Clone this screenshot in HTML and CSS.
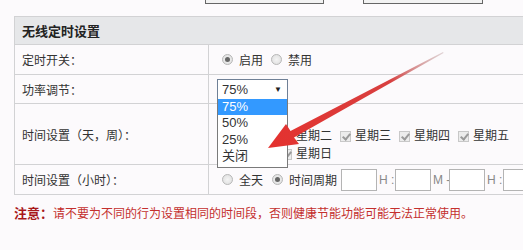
FILE: index.html
```html
<!DOCTYPE html>
<html lang="zh-CN">
<head>
  <meta charset="UTF-8">
  <meta name="viewport" content="width=device-width, initial-scale=1.0">
  <title>无线定时设置</title>
  <link rel="stylesheet" href="styles.css">
</head>
<body>
  <div class="toolbar">
    <button class="btn btn-first">保存</button>
    <button class="btn btn-second">取消</button>
  </div>

  <table class="settings">
    <colgroup>
      <col class="col-label">
      <col class="col-value">
    </colgroup>
    <thead>
      <tr>
        <th colspan="2">无线定时设置</th>
      </tr>
    </thead>
    <tbody>
      <tr class="row-switch">
        <td class="label">定时开关：</td>
        <td class="value">
          <div class="line">
            <span class="radio checked"></span><span class="opt">启用</span>
            <span class="radio"></span><span class="opt">禁用</span>
          </div>
        </td>
      </tr>
      <tr class="row-power">
        <td class="label">功率调节：</td>
        <td class="value">
          <div class="select">
            <span class="select-text">75%</span>
            <span class="select-caret">▼</span>
            <ul class="dropdown">
              <li class="active">75%</li>
              <li>50%</li>
              <li>25%</li>
              <li>关闭</li>
            </ul>
          </div>
        </td>
      </tr>
      <tr class="row-days">
        <td class="label">时间设置（天，周）：</td>
        <td class="value">
          <div class="days">
            <span class="day"><span class="check"></span>星期一</span>
            <span class="day"><span class="check"></span>星期二</span>
            <span class="day"><span class="check"></span>星期三</span>
            <span class="day"><span class="check"></span>星期四</span>
            <span class="day"><span class="check"></span>星期五</span>
            <span class="day"><span class="check"></span>星期六</span>
            <span class="day"><span class="check"></span>星期日</span>
          </div>
        </td>
      </tr>
      <tr class="row-hours">
        <td class="label">时间设置（小时）：</td>
        <td class="value">
          <div class="line">
            <span class="radio"></span><span class="opt wide">全天</span>
            <span class="radio checked"></span><span class="opt tight">时间周期</span>
            <input type="text" class="time"><span class="unit">H :</span>
            <input type="text" class="time"><span class="unit">M -</span>
            <input type="text" class="time"><span class="unit">H :</span>
            <input type="text" class="time">
          </div>
        </td>
      </tr>
    </tbody>
  </table>

  <p class="note"><b>注意：</b>请不要为不同的行为设置相同的时间段，否则健康节能功能可能无法正常使用。</p>

  <svg class="arrow" width="523" height="250" viewBox="0 0 523 250">
    <defs>
      <linearGradient id="arrowFill" x1="443" y1="52" x2="268" y2="148" gradientUnits="userSpaceOnUse">
        <stop offset="0" stop-color="#b89a9a" stop-opacity="0.4"/>
        <stop offset="0.3" stop-color="#d84040"/>
        <stop offset="1" stop-color="#e4312e"/>
      </linearGradient>
    </defs>
    <polygon points="443,52 290.5,131 286,124 268,148 299,144 294,137.5 443.6,53" fill="url(#arrowFill)"/>
  </svg>
</body>
</html>
```

FILE: styles.css
```css
* {
  box-sizing: border-box;
}
body {
  margin: 0;
  background-color: #fcfafc;
  font-family: "Liberation Sans", "Noto Sans CJK SC", sans-serif;
  font-size: 12px;
  color: #333;
  overflow: hidden;
  width: 523px;
  height: 250px;
  position: relative;
}
.toolbar {
  height: 4px;
  overflow: hidden;
  display: flex;
  align-items: flex-end;
}
.btn {
  height: 24px;
  border: 1px solid #666;
  background-color: #f2f2f2;
  font-size: 12px;
  padding: 0;
  flex: none;
}
.btn-first {
  width: 119px;
  margin-left: 205px;
}
.btn-second {
  width: 120px;
  margin-left: 39px;
}
.settings {
  margin: 12px 0 0 14px;
  width: 530px;
  border-collapse: collapse;
  table-layout: fixed;
}
.col-label {
  width: 194px;
}
.settings th,
.settings td {
  border: 1px solid #d2d2d4;
  padding: 0;
}
.settings th {
  background-color: #e6e7e9;
  height: 28px;
  text-align: left;
  padding-left: 7px;
  font-size: 13px;
  font-weight: bold;
  color: #222;
}
.label {
  padding-left: 7px !important;
  vertical-align: middle;
}
.value {
  padding-left: 13px !important;
  vertical-align: middle;
}
.line {
  display: flex;
  align-items: center;
  white-space: nowrap;
}
.row-switch td {
  height: 30px;
}
.row-power td {
  height: 29px;
}
.row-days td {
  height: 61px;
}
.row-days .value {
  vertical-align: top;
  padding-top: 23px !important;
}
.row-hours td {
  height: 30px;
}
.radio {
  flex: none;
  width: 11px;
  height: 11px;
  border-radius: 50%;
  border: 1px solid #b8b8b8;
  background: radial-gradient(circle, #f4f4f4 0%, #dcdcdc 100%);
  margin-right: 6px;
  position: relative;
}
.radio.checked::after {
  content: "";
  position: absolute;
  left: 2px;
  top: 2px;
  width: 5px;
  height: 5px;
  border-radius: 50%;
  background-color: #666;
}
.opt {
  margin-right: 8px;
}
.opt.wide {
  margin-right: 9px;
}
.opt.tight {
  margin-right: 4px;
}
.select {
  position: relative;
  width: 71px;
  height: 21px;
  border: 1px solid #6f8096;
  background-color: #fff;
  display: flex;
  align-items: center;
  justify-content: space-between;
  padding: 0 5px 0 4px;
  margin-left: -5px;
  font-size: 13px;
}
.select-caret {
  font-size: 8px;
  color: #222;
}
.dropdown {
  position: absolute;
  left: -1px;
  top: 19px;
  width: 71px;
  margin: 0;
  padding: 0 0 2px;
  list-style: none;
  border: 1px solid #7a7a7a;
  border-top: none;
  background-color: #fff;
  z-index: 2;
}
.dropdown li {
  height: 16.5px;
  line-height: 16.5px;
  padding-left: 4px;
  font-size: 13px;
  color: #333;
}
.dropdown li.active {
  background-color: #3399ff;
  color: #fff;
}
.days {
  width: 300px;
  display: flex;
  flex-wrap: wrap;
  line-height: 18px;
}
.day {
  display: flex;
  align-items: center;
  width: 59px;
  white-space: nowrap;
}
.check {
  flex: none;
  width: 11px;
  height: 11px;
  border: 1px solid #c8c8c8;
  background-color: #ececec;
  margin-right: 4px;
  position: relative;
}
.check::after {
  content: "";
  position: absolute;
  left: 3px;
  top: 0px;
  width: 3px;
  height: 6px;
  border: solid #9a9a9a;
  border-width: 0 2px 2px 0;
  transform: rotate(40deg);
}
.time {
  flex: none;
  width: 36px;
  height: 22px;
  border: 1px solid #b4b4b4;
  background-color: #fff;
  margin: 0;
  padding: 0;
}
.unit {
  flex: none;
  width: 18px;
  padding-left: 2px;
  color: #888;
  font-size: 12px;
}
.note {
  margin: 10px 0 0 14px;
  line-height: 18px;
  color: #c4302e;
  white-space: nowrap;
}
.note b {
  color: #a8181a;
  font-size: 13px;
}
.arrow {
  position: absolute;
  left: 0;
  top: 0;
  pointer-events: none;
  z-index: 3;
}
```
